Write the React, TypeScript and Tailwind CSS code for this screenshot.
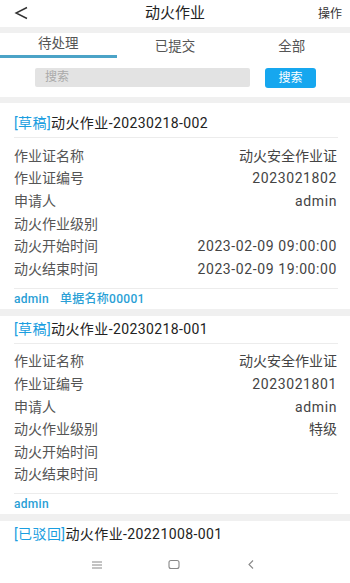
const font = { fontFamily: 'Roboto, "Noto Sans CJK SC", sans-serif' }

type Item = {
  status: string
  title: string
  name?: string
  code?: string
  applicant?: string
  level?: string
  start?: string
  end?: string
  footer: string[]
}

const items: Item[] = [
  {
    status: '[草稿]',
    title: '动火作业-20230218-002',
    name: '动火安全作业证',
    code: '2023021802',
    applicant: 'admin',
    level: '',
    start: '2023-02-09 09:00:00',
    end: '2023-02-09 19:00:00',
    footer: ['admin', '单据名称00001'],
  },
  {
    status: '[草稿]',
    title: '动火作业-20230218-001',
    name: '动火安全作业证',
    code: '2023021801',
    applicant: 'admin',
    level: '特级',
    start: '',
    end: '',
    footer: ['admin'],
  },
]

function Band() {
  return <div className="h-[7px] bg-[#f0f0f0]" />
}

function Row({ label, value }: { label: string; value?: string }) {
  const latin = !!value && /^[\x00-\x7f]+$/.test(value)
  return (
    <div className="flex h-[22.6px] items-center justify-between text-[14px] text-[#555]">
      <span>{label}</span>
      <span className={latin ? 'tracking-[0.6px] text-[#444]' : 'text-[#444]'}>{value}</span>
    </div>
  )
}

function Card({ item, first }: { item: Item; first?: boolean }) {
  return (
    <div className="bg-white">
      <div className={`flex items-center pl-[14px] text-[14px] text-[#222] ${first ? 'h-[34px] pt-[6px]' : 'h-[27px]'}`}>
        <span className="tracking-[0.4px] text-[#1a9ee0]">{item.status}</span>
        <span className="tracking-[0.4px]">{item.title}</span>
      </div>
      <div className="ml-[14px] mr-[12px] h-px bg-[#ececec]" />
      <div className="pl-[14px] pr-[13px] pt-[7px] pb-[7px]">
        <Row label="作业证名称" value={item.name} />
        <Row label="作业证编号" value={item.code} />
        <Row label="申请人" value={item.applicant} />
        <Row label="动火作业级别" value={item.level} />
        <Row label="动火开始时间" value={item.start} />
        <Row label="动火结束时间" value={item.end} />
      </div>
      <div className="ml-[14px] mr-[12px] h-px bg-[#ececec]" />
      <div className="flex h-[20px] items-center gap-[11px] pl-[14px] text-[12px] font-medium tracking-[0.3px] text-[#2a9fd6]">
        {item.footer.map((f) => (
          <span key={f}>{f}</span>
        ))}
      </div>
    </div>
  )
}

export default function App() {
  return (
    <div className="flex h-[583px] w-[350px] flex-col overflow-hidden bg-white" style={font}>
      <header className="relative flex h-[27px] items-center justify-center">
        <svg className="absolute left-[14px] top-[6px]" width="15" height="14" viewBox="0 0 15 14">
          <path d="M13 1.5 L2 7 L13 12.5" fill="none" stroke="#333" strokeWidth="1.4" />
        </svg>
        <h1 className="text-[15px] text-[#222]">动火作业</h1>
        <span className="absolute right-[8px] top-[5px] text-[12px] text-[#333]">操作</span>
      </header>
      <div className="h-[6px] bg-[#f0f0f0]" />

      <div className="grid h-[24px] grid-cols-3 text-[13.5px] text-[#555]">
        <div className="flex flex-col items-center justify-end">
          <span className="pb-[2px]">待处理</span>
          <div className="h-[3px] w-full bg-[#4ba3c7]" />
        </div>
        <div className="flex items-center justify-center pt-[1px]">已提交</div>
        <div className="flex items-center justify-center pt-[1px]">全部</div>
      </div>

      <div className="flex h-[40px] items-center pl-[35px]">
        <div className="flex h-[19px] w-[215px] items-center rounded-[2px] bg-[#e3e3e3] pl-[10px] text-[12px] text-[#aaa]">
          搜索
        </div>
        <button className="ml-[15px] mt-[1px] flex h-[20px] w-[51px] items-center justify-center rounded-[3px] bg-[#16a7ef] text-[12px] text-white">
          搜索
        </button>
      </div>
      <div className="h-[6px] bg-[#f0f0f0]" />

      <div className="flex-1 overflow-hidden">
        <Card item={items[0]} first />
        <Band />
        <Card item={items[1]} />
        <Band />
        <div className="flex h-[27px] items-center pl-[14px] text-[14px] text-[#222]">
          <span className="tracking-[0.4px] text-[#1a9ee0]">[已驳回]</span>
          <span className="tracking-[0.4px]">动火作业-20221008-001</span>
        </div>
        <div className="ml-[14px] mr-[12px] h-px bg-[#ececec]" />
      </div>

      <nav className="flex h-[35px] items-center justify-center gap-[65px] pb-[2px] pr-[2px]">
        <svg width="12" height="10" viewBox="0 0 12 10">
          <path d="M1 2h10M1 5h10M1 8h10" stroke="#888" strokeWidth="1" />
        </svg>
        <svg width="12" height="11" viewBox="0 0 12 11">
          <rect x="1" y="1.5" width="10" height="8" rx="2" fill="none" stroke="#888" strokeWidth="1.1" />
        </svg>
        <svg width="12" height="11" viewBox="0 0 12 11">
          <path d="M8 1.5 L4 5.5 L8 9.5" fill="none" stroke="#888" strokeWidth="1.1" />
        </svg>
      </nav>
    </div>
  )
}
